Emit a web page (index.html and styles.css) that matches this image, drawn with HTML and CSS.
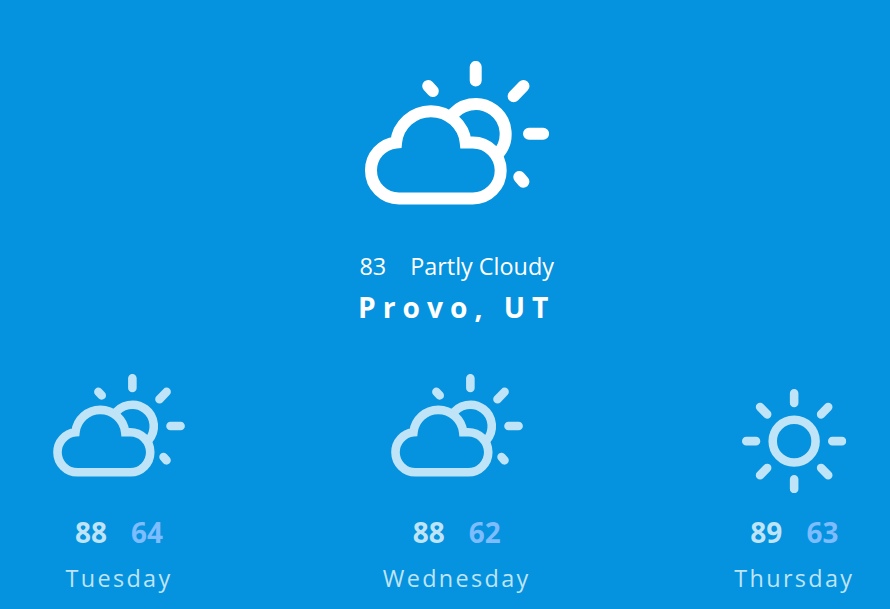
FILE: index.html
```html
<!DOCTYPE html>
<html lang="en">
<head>
<meta charset="utf-8">
<title>Weather</title>
<link rel="stylesheet" href="styles.css">
</head>
<body>
<svg class="defs" aria-hidden="true">
  <symbol id="partly-cloudy" viewBox="0 0 184 144">
    <g fill="none" stroke="currentColor" stroke-width="12">
      <path d="M31.100 81.450A35 35 0 0 1 100.700 81.450H107.700A28 28 0 0 1 107.700 137.450H34A28 28 0 0 1 6 109.450A28 28 0 0 1 31.100 81.450Z"/>
      <path d="M85 57.400A30 30 0 1 1 132.700 93.300"/>
      <path stroke-linecap="round" d="M110.700 5.900V19.600M158.500 25L148.600 35.200M164 72.700H178.100M154.300 116L158.400 120.700M63.200 25L67.800 30"/>
    </g>
  </symbol>
  <symbol id="sunny" viewBox="0 0 146 146">
    <g fill="none" stroke="currentColor" stroke-width="12">
      <circle cx="73" cy="73" r="30"/>
      <path stroke-linecap="round" d="M73 6V19.600M73 126.400V140M6 73H19.600M126.400 73H140M25.300 25.300L35.200 35.500M120.700 25.300L110.800 35.500M25.300 120.700L35.200 110.500M120.700 120.700L110.800 110.500"/>
    </g>
  </symbol>
</svg>
<main class="weather">
  <section class="current">
    <svg class="current-icon"><use href="#partly-cloudy"/></svg>
    <div class="conditions"><span>83</span><span>Partly Cloudy</span></div>
    <h1 class="city">Provo, UT</h1>
  </section>
  <section class="forecast">
    <article class="day">
      <div class="day-icon"><svg class="icon-partly"><use href="#partly-cloudy"/></svg></div>
      <div class="temps"><span>88</span><span class="low">64</span></div>
      <div class="name">Tuesday</div>
    </article>
    <article class="day">
      <div class="day-icon"><svg class="icon-partly"><use href="#partly-cloudy"/></svg></div>
      <div class="temps"><span>88</span><span class="low">62</span></div>
      <div class="name">Wednesday</div>
    </article>
    <article class="day">
      <div class="day-icon"><svg class="icon-sunny"><use href="#sunny"/></svg></div>
      <div class="temps"><span>89</span><span class="low">63</span></div>
      <div class="name">Thursday</div>
    </article>
  </section>
</main>
</body>
</html>
```

FILE: styles.css
```css
body {
  margin: 0;
  background: #0592de;
  color: #fff;
  font-family: "Open Sans", sans-serif;
}

.defs {
  display: none;
}

.weather {
  box-sizing: border-box;
  height: 609px;
  padding: 61px 0 0 23.4px;
}

.current {
  display: flex;
  flex-direction: column;
  align-items: center;
}

.current-icon {
  width: 184px;
  height: 144px;
}

.conditions {
  display: flex;
  gap: 24px;
  margin-top: 45px;
  font-size: 23.4px;
  line-height: 32px;
}

.city {
  margin: 5px 0 0;
  font-size: 28.2px;
  line-height: 40px;
  letter-spacing: 7px;
}

.forecast {
  display: grid;
  grid-template-columns: repeat(3, 148px);
  gap: 189.7px;
  justify-content: center;
  margin-top: 47px;
}

.day {
  display: flex;
  flex-direction: column;
  align-items: center;
  color: #bfe4f7;
}

.day-icon {
  display: flex;
  height: 119px;
}

.icon-partly {
  width: 132px;
  height: 103px;
}

.icon-sunny {
  width: 104.3px;
  height: 104.3px;
  margin-top: 15px;
}

.temps {
  display: flex;
  gap: 24px;
  margin-top: 19px;
  font-size: 28px;
  font-weight: 700;
  line-height: 40px;
}

.low {
  color: #7cbcff;
}

.name {
  margin-top: 10px;
  font-size: 23.4px;
  line-height: 32px;
  letter-spacing: 2.34px;
}
```
